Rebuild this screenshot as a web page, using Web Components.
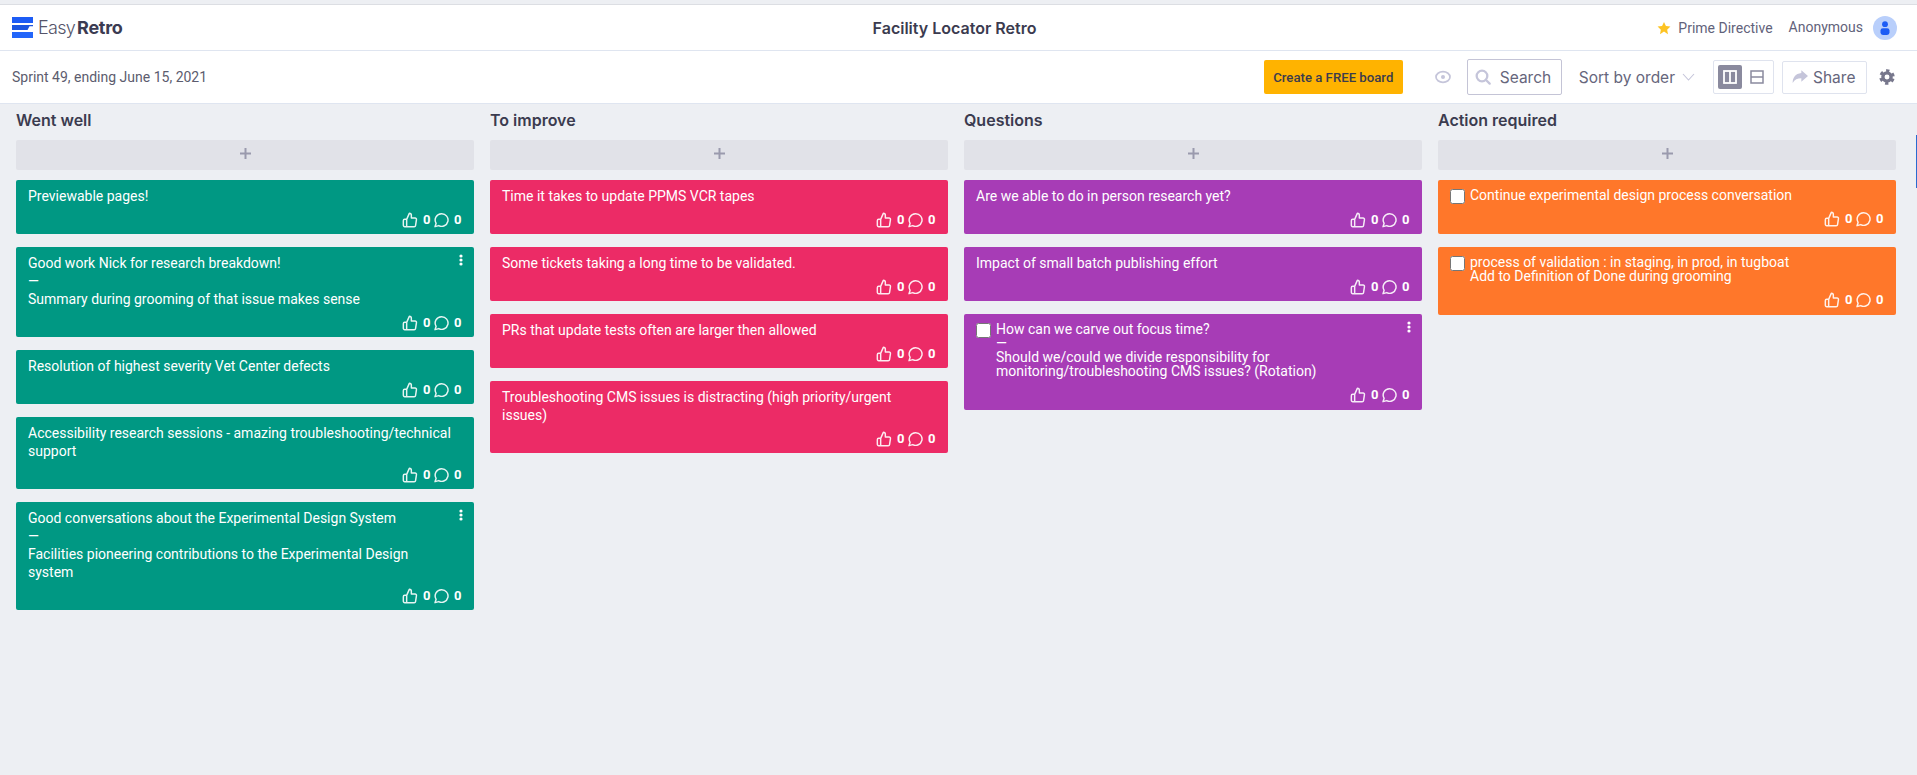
<!DOCTYPE html>
<html lang="en">
<head>
<meta charset="utf-8">
<title>Facility Locator Retro</title>
<style>
  html, body { margin: 0; height: 775px; overflow: hidden; }
  body { background: #edeff3; font-family: Roboto, "Liberation Sans", sans-serif; padding-top: 4px; box-sizing: border-box; }
  .board { display: grid; grid-template-columns: repeat(4, 458px); column-gap: 16px; padding: 0 0 0 16px; }
</style>
</head>
<body>
<retro-header title="Facility Locator Retro"></retro-header>
<retro-toolbar sprint="Sprint 49, ending June 15, 2021"></retro-toolbar>
<div class="board">
  <retro-column name="Went well">
    <retro-card color="#009883">Previewable pages!</retro-card>
    <retro-card color="#009883" menu>Good work Nick for research breakdown!<br>—<br>Summary during grooming of that issue makes sense</retro-card>
    <retro-card color="#009883">Resolution of highest severity Vet Center defects</retro-card>
    <retro-card color="#009883">Accessibility research sessions - amazing troubleshooting/technical support</retro-card>
    <retro-card color="#009883" menu>Good conversations about the Experimental Design System<br>—<br>Facilities pioneering contributions to the Experimental Design system</retro-card>
  </retro-column>
  <retro-column name="To improve">
    <retro-card color="#ec2b66">Time it takes to update PPMS VCR tapes</retro-card>
    <retro-card color="#ec2b66">Some tickets taking a long time to be validated.</retro-card>
    <retro-card color="#ec2b66">PRs that update tests often are larger then allowed</retro-card>
    <retro-card color="#ec2b66">Troubleshooting CMS issues is distracting (high priority/urgent issues)</retro-card>
  </retro-column>
  <retro-column name="Questions">
    <retro-card color="#a73cb6">Are we able to do in person research yet?</retro-card>
    <retro-card color="#a73cb6">Impact of small batch publishing effort</retro-card>
    <retro-card color="#a73cb6" check menu>How can we carve out focus time?<br>—<br>Should we/could we divide responsibility for monitoring/troubleshooting CMS issues? (Rotation)</retro-card>
  </retro-column>
  <retro-column name="Action required">
    <retro-card color="#ff772a" check>Continue experimental design process conversation</retro-card>
    <retro-card color="#ff772a" check>process of validation : in staging, in prod, in tugboat<br>Add to Definition of Done during grooming</retro-card>
  </retro-column>
</div>
<retro-thumb></retro-thumb>

<script>
class RetroHeader extends HTMLElement {
  constructor() {
    super();
    const shadowRoot = this.attachShadow({ mode: 'open' });
    shadowRoot.innerHTML = `
      <style>
      :host {
        display: grid;
        grid-template-columns: 1fr auto 1fr;
        align-items: center;
        height: 45px;
        background: #fff;
        border-top: 1px solid #dcdee3;
        border-bottom: 1px solid #dfe5f0;
        padding: 0 20px 0 12px;
        font-family: Roboto, sans-serif;
      }
      .logo { display: flex; align-items: center; }
      .logo svg { margin-right: 5px; }
      .word { font: 300 18px Inter, sans-serif; color: #55556a; letter-spacing: -0.7px; }
      .word b { font-weight: 700; color: #3b3b52; letter-spacing: -0.3px; margin-left: 2px; }
      .title { font: 600 16px Inter, sans-serif; color: #3b3b4f; }
      .right { display: flex; align-items: center; justify-content: flex-end; font-size: 14px; color: #62627a; }
      .star { margin-right: 7px; }
      .user { margin-left: 16px; margin-right: 10px; position: relative; top: -1px; }
      .avatar { width: 24px; height: 24px; border-radius: 50%; background: #b9cffb; display: block; }
      </style>
      <div class="logo">
        <svg width="21" height="21" viewBox="0 0 21 21">
          <rect width="21" height="6" fill="#1d5cf5"/>
          <path d="M0 8h21v1.2h-3.5L15.5 13H0z" fill="#1d56e0"/>
          <path d="M0 15h21v6H0z" fill="#2366fa"/>
        </svg>
        <span class="word">Easy<b>Retro</b></span>
      </div>
      <div class="title"></div>
      <div class="right">
        <svg class="star" width="14" height="14" viewBox="0 0 24 24"><path fill="#fdc322" d="M12 1.5l3.3 7 7.7 1-5.6 5.3 1.4 7.7L12 18l-6.8 4.5 1.4-7.7L1 9.5l7.7-1z"/></svg>
        <span>Prime Directive</span>
        <span class="user">Anonymous</span>
        <svg class="avatar" viewBox="0 0 24 24"><circle cx="12" cy="8.2" r="2.9" fill="#1c5cf5"/><rect x="7.5" y="12.2" width="9" height="6.8" rx="2.4" fill="#1c5cf5"/></svg>
      </div>
    `;
  }

  connectedCallback() {
    this.shadowRoot.querySelector('.title').textContent = this.getAttribute('title');
  }
}

class RetroToolbar extends HTMLElement {
  constructor() {
    super();
    const shadowRoot = this.attachShadow({ mode: 'open' });
    shadowRoot.innerHTML = `
      <style>
      :host {
        display: flex;
        align-items: center;
        height: 52px;
        background: #fff;
        border-bottom: 1px solid #dfe5f0;
        padding: 0 22px 0 12px;
        font-family: Roboto, sans-serif;
      }
      .sprint { font-size: 14px; color: #5c5c6e; margin-right: auto; }
      .create {
        width: 139px; height: 34px; background: #ffb300; border-radius: 2px;
        display: flex; align-items: center; justify-content: center;
        font-size: 13.2px; font-weight: 500; color: #3c3c4c;
      }
      .eye { margin-left: 32px; margin-right: 16px; }
      .search {
        box-sizing: border-box; width: 95px; height: 36px;
        border: 1px solid #c4c4d6; border-radius: 2px;
        display: flex; align-items: center; padding-left: 7px;
        font: 400 15.5px Inter, sans-serif; color: #66667c;
      }
      .search svg { margin-right: 9px; }
      .sort { font: 400 15.5px Inter, sans-serif; color: #66667c; margin-left: 17px; margin-right: 7px; }
      .toggle {
        box-sizing: border-box; width: 61px; height: 34px; margin-left: 18px;
        border: 1px solid #dfe3ee; border-radius: 2px;
        display: flex; align-items: center; padding-left: 4px;
      }
      .toggle .on { width: 24px; height: 24px; background: #8a8a9e; border-radius: 2px; display: flex; align-items: center; justify-content: center; }
      .toggle .off { width: 24px; height: 24px; margin-left: 3px; display: flex; align-items: center; justify-content: center; }
      .share {
        box-sizing: border-box; width: 85px; height: 33px; margin-left: 8px;
        border: 1px solid #dfe3ee; border-radius: 2px;
        display: flex; align-items: center; padding-left: 9px;
        font: 400 15.5px Inter, sans-serif; color: #66667c;
      }
      .share svg { margin-right: 5px; }
      .gear { margin-left: 12px; }
      </style>
      <div class="sprint"></div>
      <div class="create">Create a FREE board</div>
      <svg class="eye" width="16" height="16" viewBox="0 0 24 24" fill="none" stroke="#c5c5da" stroke-width="2.6"><ellipse cx="12" cy="12" rx="10.5" ry="8"/><circle cx="12" cy="12" r="3" fill="#c5c5da" stroke="none"/></svg>
      <div class="search">
        <svg width="16" height="16" viewBox="0 0 24 24" fill="none" stroke="#c5c5da" stroke-width="3.4"><circle cx="10.5" cy="10.5" r="8"/><path d="M16.5 16.5L22 22" stroke-linecap="round"/></svg>
        <span>Search</span>
      </div>
      <div class="sort">Sort by order</div>
      <svg width="13" height="8" viewBox="0 0 13 8" fill="none" stroke="#c5c5da" stroke-width="1.1"><path d="M1 1l5.5 6L12 1"/></svg>
      <div class="toggle">
        <div class="on"><svg width="14" height="14" viewBox="0 0 14 14" fill="none" stroke="#fff" stroke-width="1.8"><rect x="1" y="1" width="12" height="12"/><path d="M7 1v12"/></svg></div>
        <div class="off"><svg width="14" height="14" viewBox="0 0 14 14" fill="none" stroke="#8a8a9e" stroke-width="1.5"><rect x="1" y="1" width="12" height="12"/><path d="M1 7h12"/></svg></div>
      </div>
      <div class="share">
        <svg width="16" height="14" viewBox="0 0 24 20"><path fill="#c5c5da" d="M14 0l10 8.5L14 17v-5C8 12 4 14 1 19c0-8 4-14 13-15z"/></svg>
        <span>Share</span>
      </div>
      <svg class="gear" width="16" height="16" viewBox="0 0 24 24" fill="none" stroke="#77778c"><circle cx="12" cy="12" r="6.2" stroke-width="5"/><circle cx="12" cy="12" r="9.6" stroke-width="4" stroke-dasharray="5 5.05" stroke-dashoffset="-2.53"/></svg>
    `;
  }

  connectedCallback() {
    this.shadowRoot.querySelector('.sprint').textContent = this.getAttribute('sprint');
  }
}

class RetroColumn extends HTMLElement {
  constructor() {
    super();
    const shadowRoot = this.attachShadow({ mode: 'open' });
    shadowRoot.innerHTML = `
      <style>
      :host { display: flex; flex-direction: column; min-width: 0; }
      .name { font: 600 16px/20px Inter, sans-serif; color: #3b3b4f; padding-top: 6px; height: 30px; box-sizing: border-box; margin-bottom: 6px; }
      .add {
        height: 30px; background: #e1e2e8; border-radius: 2px; margin-bottom: 10px;
        display: flex; align-items: center; justify-content: center; padding-bottom: 4px; box-sizing: border-box;
      }
      .cards { display: flex; flex-direction: column; gap: 13px; }
      </style>
      <div class="name"></div>
      <div class="add"><svg width="11" height="11" viewBox="0 0 11 11"><path d="M5.5 0v11M0 5.5h11" stroke="#9a9aad" stroke-width="2"/></svg></div>
      <div class="cards"><slot></slot></div>
    `;
  }

  connectedCallback() {
    this.shadowRoot.querySelector('.name').textContent = this.getAttribute('name');
  }
}

class RetroCard extends HTMLElement {
  constructor() {
    super();
    const shadowRoot = this.attachShadow({ mode: 'open' });
    shadowRoot.innerHTML = `
      <style>
      :host {
        display: block;
        position: relative;
        box-sizing: border-box;
        border-radius: 2px;
        padding: 7px 13px 6px 12px;
        color: #fff;
        font: 400 14px/18px Roboto, sans-serif;
      }
      :host([check]) { line-height: 14px; padding-top: 8px; padding-bottom: 7px; }
      .body { display: flex; align-items: flex-start; padding-right: 7px; }
      input { width: 15px; height: 15px; margin: 1px 5px -2px 0; flex: none; }
      .foot {
        display: flex; align-items: center; justify-content: flex-end;
        height: 16px; margin-top: 7px;
        font-size: 13px; font-weight: 700; line-height: 16px;
      }
      :host([check]) .foot { margin-top: 9px; }
      .foot svg { display: block; }
      .foot .c { margin: 0 3px 0 5px; width: 7px; text-align: center; }
      .foot .c:last-child { margin-right: 0; }
      .menu { display: none; position: absolute; top: 7px; right: 11px; width: 4px; }
      :host([menu]) .menu { display: block; }
      </style>
      <div class="body"><input type="checkbox"><div><slot></slot></div></div>
      <div class="foot">
        <svg width="16" height="16" viewBox="0 0 24 24" fill="none" stroke="currentColor" stroke-width="2.2" stroke-linejoin="round" opacity=".9"><path d="M14 9V5a3 3 0 0 0-3-3l-4 9v11h11.3a2 2 0 0 0 2-1.7l1.4-9a2 2 0 0 0-2-2.3zM7 22H4a2 2 0 0 1-2-2v-7a2 2 0 0 1 2-2h3"/></svg>
        <span class="c">0</span>
        <svg width="16" height="16" viewBox="0 0 24 24" fill="none" stroke="currentColor" stroke-width="2.2" stroke-linejoin="round" opacity=".9"><path d="M13 2.5a9.5 9.5 0 1 1-4.4 17.9L3 22l1.7-5A9.5 9.5 0 0 1 13 2.5z"/></svg>
        <span class="c">0</span>
      </div>
      <svg class="menu" height="12" viewBox="0 0 4 12" fill="#fff"><circle cx="2" cy="2" r="1.6"/><circle cx="2" cy="6" r="1.6"/><circle cx="2" cy="10" r="1.6"/></svg>
    `;
  }

  connectedCallback() {
    this.style.background = this.getAttribute('color');
    if (!this.hasAttribute('check')) {
      this.shadowRoot.querySelector('input').remove();
    }
  }
}

// the sliver of a scrollbar thumb on the right edge
class RetroThumb extends HTMLElement {
  constructor() {
    super();
    const shadowRoot = this.attachShadow({ mode: 'open' });
    shadowRoot.innerHTML = `
      <style>
      :host { display: block; position: absolute; top: 135px; right: 0; width: 1px; height: 53px; background: #2a6bd0; }
      </style>
    `;
  }
}

customElements.define('retro-header', RetroHeader);
customElements.define('retro-toolbar', RetroToolbar);
customElements.define('retro-column', RetroColumn);
customElements.define('retro-card', RetroCard);
customElements.define('retro-thumb', RetroThumb);
</script>
</body>
</html>
